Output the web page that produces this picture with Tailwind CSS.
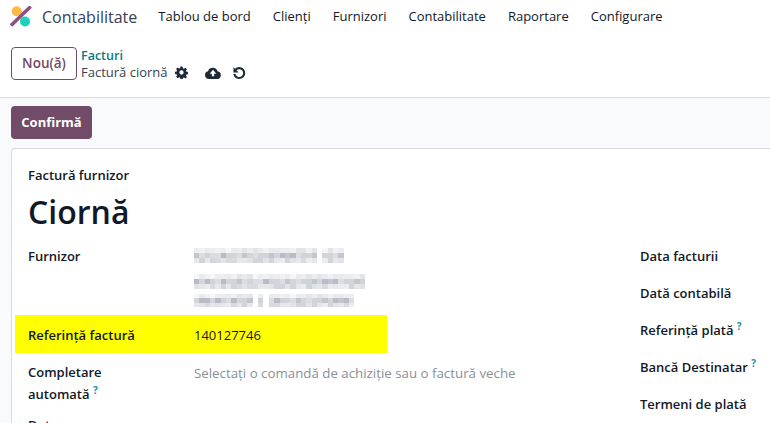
<!DOCTYPE html>
<html lang="en">
<head>
    <meta charset="UTF-8">
    <title>Contabilitate</title>
    <script src="https://cdn.jsdelivr.net/npm/@tailwindcss/browser@4"></script>
</head>
<body class="h-[423px] w-[770px] overflow-hidden bg-white font-['Open_Sans',sans-serif] text-[13px] text-[#111827]">
    <!-- Top nav -->
    <nav class="flex h-[33px] items-center">
        <svg class="ml-[10px] h-[22px] w-[22px]" viewBox="0 0 22 22">
            <circle cx="6.700" cy="5.200" r="5" fill="#fbb945"/>
            <circle cx="15" cy="15.500" r="5" fill="#1ad3bb"/>
            <path d="M1 19.500 L20.700 0.500" stroke="#8f4f7f" stroke-width="3.500"/>
        </svg>
        <span class="ml-[10px] text-[16px] text-[#374151]">Contabilitate</span>
        <div class="ml-[21px] flex gap-[22px]">
            <span>Tablou de bord</span>
            <span>Clienți</span>
            <span>Furnizori</span>
            <span>Contabilitate</span>
            <span>Raportare</span>
            <span>Configurare</span>
        </div>
    </nav>

    <!-- Control panel -->
    <div class="flex h-[65px] items-start border-b border-[#d8dadd] pt-[14px]">
        <button class="ml-[11px] h-[33px] w-[66px] rounded-[4px] border border-[#714b67] text-[13.500px] font-semibold text-[#714b67]">Nou(ă)</button>
        <div class="ml-[4px] leading-[17px]">
            <div class="text-[12.500px] font-semibold text-[#017e84]">Facturi</div>
            <div class="flex items-center text-[#374151]">
                Factură ciornă
                <svg class="ml-[7px] h-[13px] w-[13px]" viewBox="0 0 24 24" fill="#1f2937"><path fill-rule="evenodd" d="M10 1h4l.6 3.200 1.900.8 2.700-1.800 2.800 2.800-1.800 2.700.8 1.900 3 .4v4l-3 .6-.8 1.900 1.800 2.700-2.800 2.800-2.700-1.800-1.900.8-.6 2.900h-4l-.6-3.200-1.900-.8-2.700 1.800-2.800-2.800 1.800-2.700-.8-1.900-3-.6v-4l3-.4.8-1.900-1.800-2.700 2.800-2.800 2.700 1.800 1.900-.8zM12 8a4 4 0 1 0 0 8 4 4 0 0 0 0-8z"/></svg>
                <svg class="ml-[17px] h-[14px] w-[16px]" viewBox="0 0 24 20" fill="#1f2937"><path fill-rule="evenodd" d="M6 19a6 6 0 0 1-1.500-11.800A7.500 7.500 0 0 1 18.800 7.500 5.800 5.800 0 0 1 18.500 19zM12 5l-5 6h3.300v4h3.400v-4H17z"/></svg>
                <svg class="ml-[11px] h-[14px] w-[14px]" viewBox="0 0 24 24" fill="none" stroke="#1f2937" stroke-width="3.600"><path d="M6 6.500a8.500 8.500 0 1 1-2 7"/><path d="M2.500 2v9h9z" fill="#1f2937" stroke="none"/></svg>
            </div>
        </div>
    </div>

    <!-- Content area -->
    <main class="bg-[#f9fafb] pl-[11px] pt-[8px]">
        <button class="h-[33px] w-[81px] rounded-[4px] bg-[#714b67] text-[13px] font-bold text-white">Confirmă</button>
        <div class="mt-[9px] h-[300px] rounded-tl-[4px] border-t border-l border-[#d8dadd] bg-white pl-[16px]">
            <div class="pt-[17px] font-semibold leading-[18px]">Factură furnizor</div>
            <h1 class="mt-[5px] text-[32px] leading-[46px] font-semibold">Ciornă</h1>
            <div class="mt-[4px] flex">
                <!-- Left column -->
                <div class="w-[612px]">
                    <div class="flex">
                        <div class="w-[166px] pt-[8px] font-semibold leading-[18px]">Furnizor</div>
                        <div id="mosaic" class="pt-[9px]"></div>
                    </div>
                    <div class="-ml-[13px] mt-[8px] flex h-[38px] w-[372px] items-center bg-[#ffff00] pl-[13px] pt-[4px]">
                        <div class="w-[166px] font-semibold">Referință factură</div>
                        <div>140127746</div>
                    </div>
                    <div class="mt-[8px] flex">
                        <div class="w-[166px] font-semibold leading-[22px]">Completare<br>automată <sup class="text-[10px] font-bold text-[#1b8fb0]">?</sup></div>
                        <div class="pt-[1px] text-[13.300px] leading-[22px] text-[#8a8f98]">Selectați o comandă de achiziție sau o factură veche</div>
                    </div>
                    <div class="mt-[11px] font-semibold leading-[18px]">Data</div>
                </div>
                <!-- Right column -->
                <div class="flex flex-col gap-[19px] pt-[8px] font-semibold leading-[18px]">
                    <div>Data facturii</div>
                    <div>Dată contabilă</div>
                    <div>Referință plată <sup class="text-[10px] font-bold text-[#1b8fb0]">?</sup></div>
                    <div>Bancă Destinatar <sup class="text-[10px] font-bold text-[#1b8fb0]">?</sup></div>
                    <div>Termeni de plată</div>
                </div>
            </div>
        </div>
    </main>

    <script>
        // blurred supplier address, drawn as pixel mosaic rows
        const rows = [
            { cols: 28, cell: 5, top: 0, gaps: [23] },
            { cols: 32, cell: 5, top: 11, gaps: [] },
            { cols: 30, cell: 4.333, top: 5, gaps: [11, 13] }
        ];
        const tones = [
            ['#f0f1f3', '#e8eaed', '#f6f6f8', '#e2e4e8', '#ecedf0'],
            ['#d3d5da', '#c4c6ce', '#dcdde1', '#b9bcc6', '#cfd3da'],
            ['#e2e3e7', '#d8dade', '#ebecef', '#d1d4da', '#e6e7ea']
        ];
        let seed = 7;
        document.getElementById('mosaic').innerHTML = rows.map(r => {
            let cells = '';
            for (let y = 0; y < 3; y++) {
                for (let x = 0; x < r.cols; x++) {
                    seed = (seed * 31 + 11) % 97;
                    const c = r.gaps.includes(x) ? '#fff' : tones[y][seed % 5];
                    cells += `<span style="background:${c}"></span>`;
                }
            }
            return `<div style="display:grid;margin-top:${r.top}px;grid-template-columns:repeat(${r.cols},5.350px);grid-auto-rows:${r.cell}px">${cells}</div>`;
        }).join('');
    </script>
</body>
</html>
